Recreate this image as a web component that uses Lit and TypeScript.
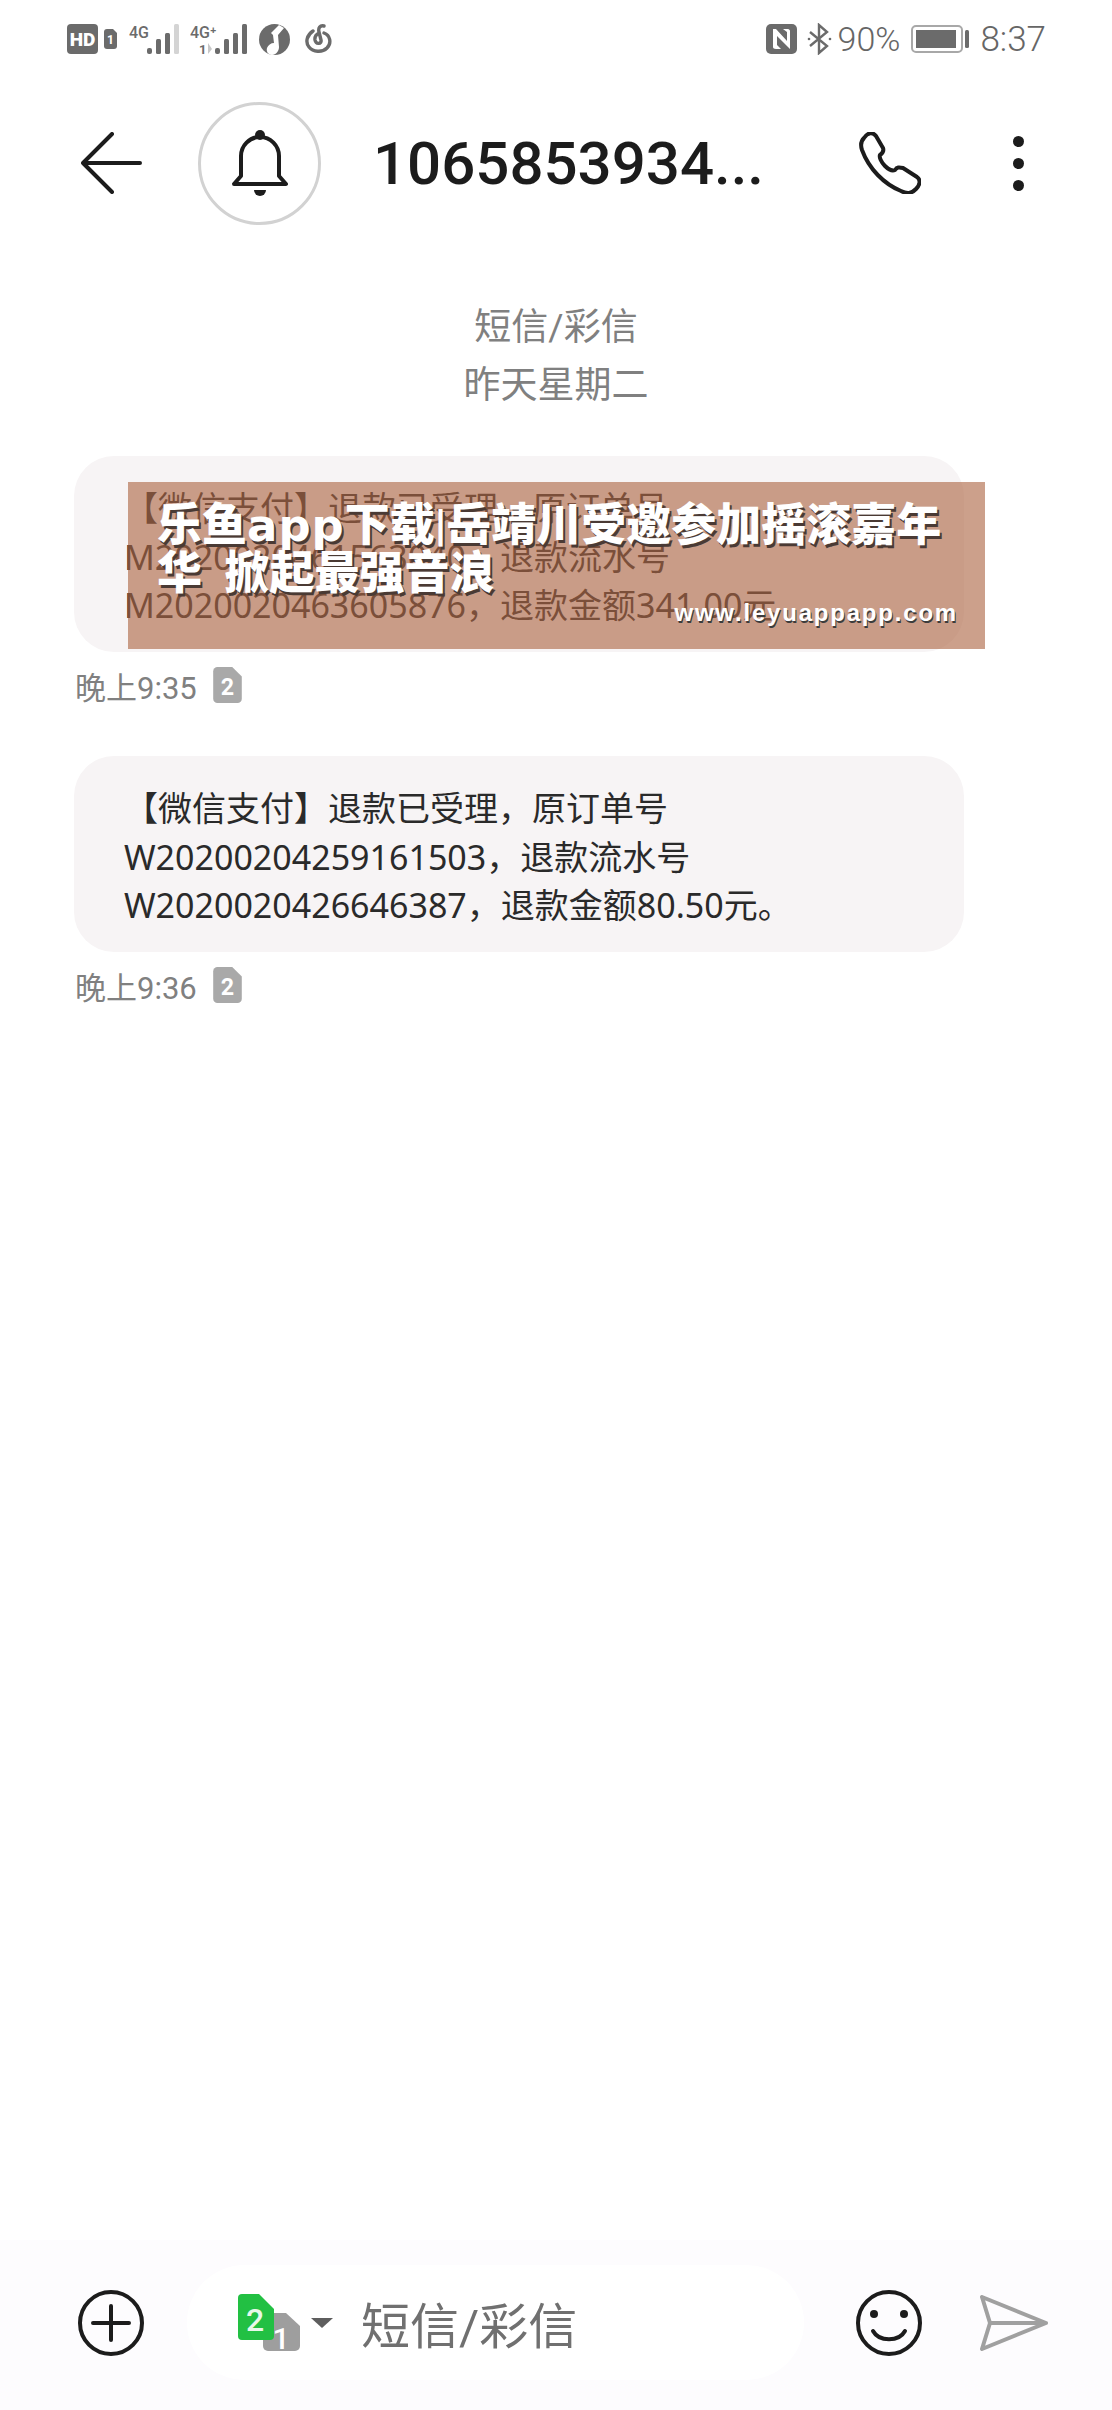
import { LitElement, html, css, svg } from "lit";
import { customElement } from "lit/decorators.js";

const messages = [
  { lines: ["【微信支付】退款已受理，原订单号", "M2020020461563040，退款流水号", "M2020020463605876，退款金额341.00元"], time: "晚上9:35", ad: true },
  { lines: ["【微信支付】退款已受理，原订单号", "W2020020425916 1503，退款流水号".replace(" ", ""), "W2020020426646387，退款金额80.50元。"], time: "晚上9:36", ad: false },
];

// signal bars, x offsets are inside each svg
const bars = (x: number, lastColor: string) => svg`
  <rect x=${x} y="24" width="5" height="6" rx="2" fill="#6b6b6b"></rect>
  <rect x=${x + 9} y="15" width="5" height="15" rx="1.5" fill="#6b6b6b"></rect>
  <rect x=${x + 18} y="9" width="5" height="21" rx="1.5" fill="#6b6b6b"></rect>
  <rect x=${x + 27} y="0" width="5" height="30" rx="1.5" fill=${lastColor}></rect>
`;

@customElement("app-root")
export class AppRoot extends LitElement {
  static styles = css`
    :host {
      display: flex;
      flex-direction: column;
      height: 2410px;
      background: #fff;
      font-family: Roboto, "Noto Sans CJK SC", sans-serif;
      color: #222;
      overflow: hidden;
    }
    svg { display: block; flex: none; }
    svg text { font-family: "Roboto", "Liberation Sans", sans-serif; }

    .status {
      height: 78px;
      padding: 0 66px 0 67px;
      box-sizing: border-box;
      display: flex;
      align-items: center;
      color: #666;
    }
    .status .grow { flex: 1; }
    .status span { font-weight: 300; font-size: 34px; line-height: 1; }
    .sim1 { margin-left: 6px; }
    .sig1 { margin-left: 12px; }
    .sig2 { margin-left: 9px; margin-top: 6px; }
    .music { margin-left: 11px; }
    .cloud { margin-left: 15px; }
    .bt { margin-left: 9px; }
    .pct { margin-left: 5px; }
    .batt { margin-left: 11px; }
    .status .clock { margin-left: 11px; font-size: 35px; }

    .toolbar {
      height: 170px;
      display: flex;
      align-items: center;
      padding-left: 81px;
    }
    .avatar {
      width: 123px;
      height: 123px;
      box-sizing: border-box;
      margin-left: 56px;
      border: 3px solid #d2d2d2;
      border-radius: 50%;
      display: flex;
      align-items: center;
      justify-content: center;
    }
    .title {
      width: 486px;
      margin-left: 52px;
      font-size: 60px;
      font-weight: 500;
      color: #1c1c1c;
      white-space: nowrap;
    }
    .dots {
      margin-left: 92px;
      display: flex;
      flex-direction: column;
      gap: 11px;
    }
    .dots i {
      width: 11px;
      height: 11px;
      border-radius: 50%;
      background: #1c1c1c;
    }

    .heading {
      margin-top: 51px;
      text-align: center;
      font-size: 37px;
      line-height: 58px;
      color: #808080;
    }

    .list {
      flex: 1;
      padding: 41px 0 0 74px;
    }
    .msg { position: relative; margin-bottom: 48px; }
    .bubble {
      width: 890px;
      height: 196px;
      box-sizing: border-box;
      padding: 28px 0 0 50px;
      background: #f7f4f5;
      border-radius: 40px;
      font-family: "Noto Sans", "Noto Sans CJK SC", sans-serif;
      font-size: 34px;
      line-height: 48.5px;
      color: #2a2a2a;
      white-space: nowrap;
    }
    .meta {
      height: 46px;
      margin-top: 10px;
      padding-left: 1px;
      display: flex;
      align-items: center;
      gap: 16px;
      font-size: 31px;
      color: #808080;
    }

    /* ad banner burnt into the screenshot, sits over the first bubble */
    .ad {
      position: absolute;
      left: 54px;
      top: 26px;
      width: 857px;
      height: 167px;
      box-sizing: border-box;
      padding: 20px 0 0 29px;
      background: rgba(173, 102, 67, 0.62);
      color: #fff;
      font-size: 45px;
      line-height: 48px;
      font-weight: 900;
      white-space: nowrap;
      text-shadow: 2px 3px 0 #4a3a34;
    }
    .ad .latin {
      font-family: "DejaVu Sans", sans-serif;
      font-weight: 700;
      letter-spacing: 1px;
    }
    .ad .url {
      position: absolute;
      right: 27px;
      bottom: 22px;
      font-family: "Liberation Sans", sans-serif;
      font-size: 24px;
      line-height: 28px;
      font-weight: 700;
      letter-spacing: 1.8px;
      text-shadow: 1px 2px 0 #3c3c3c;
    }

    .bottom {
      height: 170px;
      box-sizing: border-box;
      padding: 0 0 5px 78px;
      background: #fdfcfe;
      display: flex;
      align-items: center;
    }
    .pill {
      width: 617px;
      height: 115px;
      box-sizing: border-box;
      margin-left: 43px;
      padding-left: 51px;
      background: #fff;
      border-radius: 58px;
      display: flex;
      align-items: center;
      font-size: 49px;
      color: #707070;
    }
    .sims { margin-top: 7px; }
    .caret { margin-left: 11px; margin-right: 28px; }
    .smile { margin-left: 52px; }
    .send { margin-left: 57px; }
  `;

  private simBadge(n: string) {
    return html`<svg width="29" height="36" viewBox="0 0 27 34">
      <path d="M4 0H18L27 9V30a4 4 0 0 1-4 4H4a4 4 0 0 1-4-4V4a4 4 0 0 1 4-4Z" fill="#a9a9a9"></path>
      <text x="13.5" y="26" font-size="22" font-weight="700" fill="#fff" text-anchor="middle">${n}</text>
    </svg>`;
  }

  private statusBar() {
    return html`<div class="status">
      <svg width="31" height="30" viewBox="0 0 31 30">
        <rect width="31" height="30" rx="4" fill="#6b6b6b"></rect>
        <text x="15.5" y="22" font-size="19" font-weight="900" fill="#fff" text-anchor="middle">HD</text>
      </svg>
      <svg class="sim1" width="13" height="20" viewBox="0 0 13 20">
        <path d="M3 0H9L13 4V17a3 3 0 0 1-3 3H3a3 3 0 0 1-3-3V3a3 3 0 0 1 3-3Z" fill="#6b6b6b"></path>
        <text x="6.5" y="15" font-size="12" font-weight="700" fill="#fff" text-anchor="middle">1</text>
      </svg>
      <svg class="sig1" width="52" height="30" viewBox="0 0 52 30">
        <text x="0" y="14" font-size="16" font-weight="500" fill="#6b6b6b">4G</text>
        ${bars(18, "#d4d4d4")}
      </svg>
      <svg class="sig2" width="58" height="36" viewBox="0 0 58 36">
        <text x="0" y="14" font-size="16" font-weight="500" fill="#6b6b6b">4G⁺</text>
        <text x="9" y="30" font-size="13" font-weight="700" fill="#6b6b6b">1</text>
        <path d="M18 19v11l4-5Z" fill="#c8c8c8"></path>
        ${bars(25, "#6b6b6b")}
      </svg>
      <svg class="music" width="31" height="31" viewBox="0 0 31 31">
        <circle cx="15.5" cy="15.5" r="15.5" fill="#6b6b6b"></circle>
        <path d="M12 9 20 1 25 4 19 11 20 23C20 27 17 31 13 31 9 31 7 27 8 24 9 21 12 19 15 19L14 11Z" fill="#fff"></path>
      </svg>
      <svg class="cloud" width="28" height="30" viewBox="0 0 28 30" fill="none" stroke="#6b6b6b" stroke-width="3.4" stroke-linecap="round">
        <path d="M19 2C15 1 13 4 14 8L16 16C17 20 11 21 10 16 9.500 12 12 10 14 9"></path>
        <path d="M8 7C2 11 0 18 4 23 8 28 17 29 22 24 27 19 25 11 19 9"></path>
      </svg>
      <div class="grow"></div>
      <svg width="31" height="30" viewBox="0 0 31 30">
        <rect width="31" height="30" rx="5" fill="#6b6b6b"></rect>
        <path d="M7 5h3l11 12v-9l-4-3h5c1 0 2 1 2 2v18l-13-13v9l4 4h-5c-2 0-3-1-3-2Z" fill="#fff"></path>
      </svg>
      <svg class="bt" width="27" height="32" viewBox="0 0 25 32" fill="none" stroke="#6b6b6b" stroke-width="2.400">
        <path d="M3 9 20 23 12 30V2L20 9 3 23"></path>
        <circle cx="2" cy="16" r="1.300" fill="#6b6b6b" stroke="none"></circle>
        <circle cx="23" cy="16" r="1.300" fill="#6b6b6b" stroke="none"></circle>
      </svg>
      <span class="pct">90%</span>
      <svg class="batt" width="58" height="28" viewBox="0 0 58 28">
        <rect x="1" y="1" width="50" height="26" rx="4" fill="none" stroke="#a8a8a8" stroke-width="2"></rect>
        <rect x="5" y="5" width="40" height="18" fill="#6b6b6b"></rect>
        <rect x="54" y="5" width="4" height="18" rx="1.500" fill="#6b6b6b"></rect>
      </svg>
      <span class="clock">8:37</span>
    </div>`;
  }

  private toolbar() {
    return html`<div class="toolbar">
      <svg width="61" height="62" viewBox="0 0 61 62" fill="none" stroke="#1c1c1c" stroke-width="4" stroke-linecap="round" stroke-linejoin="round">
        <path d="M31 2 2 31 31 60M2 31H59"></path>
      </svg>
      <div class="avatar">
        <svg width="58" height="67" viewBox="0 0 58 67">
          <circle cx="29" cy="5" r="5" fill="#1c1c1c"></circle>
          <path d="M3 54 10 46V26a19 19 0 0 1 38 0V46L55 54Z" fill="none" stroke="#1c1c1c" stroke-width="4" stroke-linejoin="round"></path>
          <path d="M23 60H35a6 6 0 0 1-12 0Z" fill="#1c1c1c"></path>
        </svg>
      </div>
      <div class="title">1065853934...</div>
      <svg width="62" height="62" viewBox="0 0 62 62" fill="none" stroke="#1c1c1c" stroke-width="4" stroke-linejoin="round">
        <path d="M5 6C9 0 14 0 17 4L24 16C25 19 24 21 21 23 20 25 22 30 26 34 30 38 34 39 36 38 38 35 40 35 44 36L58 45C62 48 61 53 57 57 52 62 48 62 42 59 25 52 10 37 3 18 1 12 2 9 5 6Z"></path>
      </svg>
      <div class="dots"><i></i><i></i><i></i></div>
    </div>`;
  }

  private bottomBar() {
    return html`<div class="bottom">
      <svg width="66" height="66" viewBox="0 0 66 66" fill="none" stroke="#1c1c1c" stroke-width="4" stroke-linecap="round">
        <circle cx="33" cy="33" r="31"></circle>
        <path d="M33 16V50M15 33H51"></path>
      </svg>
      <div class="pill">
        <svg class="sims" width="62" height="64" viewBox="0 0 62 64">
          <path d="M29 19H48L62 32V52a5 5 0 0 1-5 5H30a5 5 0 0 1-5-5V23a4 4 0 0 1 4-4Z" fill="#9e9e9e"></path>
          <text x="43" y="55" font-size="30" font-weight="500" fill="#fff" text-anchor="middle">1</text>
          <path d="M4 0H21L36 15V42a4 4 0 0 1-4 4H4a4 4 0 0 1-4-4V4a4 4 0 0 1 4-4Z" fill="#22c043"></path>
          <text x="17" y="37" font-size="32" font-weight="500" fill="#e8f8ea" text-anchor="middle">2</text>
        </svg>
        <svg class="caret" width="22" height="10" viewBox="0 0 22 10"><path d="M0 0H22L11 10Z" fill="#5e5e5e"></path></svg>
        短信/彩信
      </div>
      <svg class="smile" width="66" height="66" viewBox="0 0 66 66" fill="none" stroke="#1c1c1c" stroke-width="4" stroke-linecap="round">
        <circle cx="33" cy="33" r="31"></circle>
        <circle cx="18" cy="24" r="4" fill="#1c1c1c" stroke="none"></circle>
        <circle cx="48" cy="24" r="4" fill="#1c1c1c" stroke="none"></circle>
        <path d="M17 41C23 52 43 52 49 41"></path>
      </svg>
      <svg class="send" width="70" height="56" viewBox="0 0 70 56" fill="none" stroke="#a0a0a0" stroke-width="4" stroke-linejoin="round" stroke-linecap="round">
        <path d="M3 2 67 28 3 54 11 28ZM11 28H67"></path>
      </svg>
    </div>`;
  }

  render() {
    return html`
      ${this.statusBar()}
      ${this.toolbar()}
      <div class="heading">短信/彩信<br />昨天星期二</div>
      <div class="list">
        ${messages.map(
          (m) => html`<div class="msg">
            <div class="bubble">${m.lines.map((l) => html`<div>${l}</div>`)}</div>
            ${m.ad
              ? html`<div class="ad">
                  <div>乐鱼<span class="latin">app</span>下载|岳靖川受邀参加摇滚嘉年</div>
                  <div>华&nbsp;&nbsp;掀起最强音浪</div>
                  <div class="url">www.leyuappapp.com</div>
                </div>`
              : ""}
            <div class="meta">${m.time}${this.simBadge("2")}</div>
          </div>`
        )}
      </div>
      ${this.bottomBar()}
    `;
  }
}
